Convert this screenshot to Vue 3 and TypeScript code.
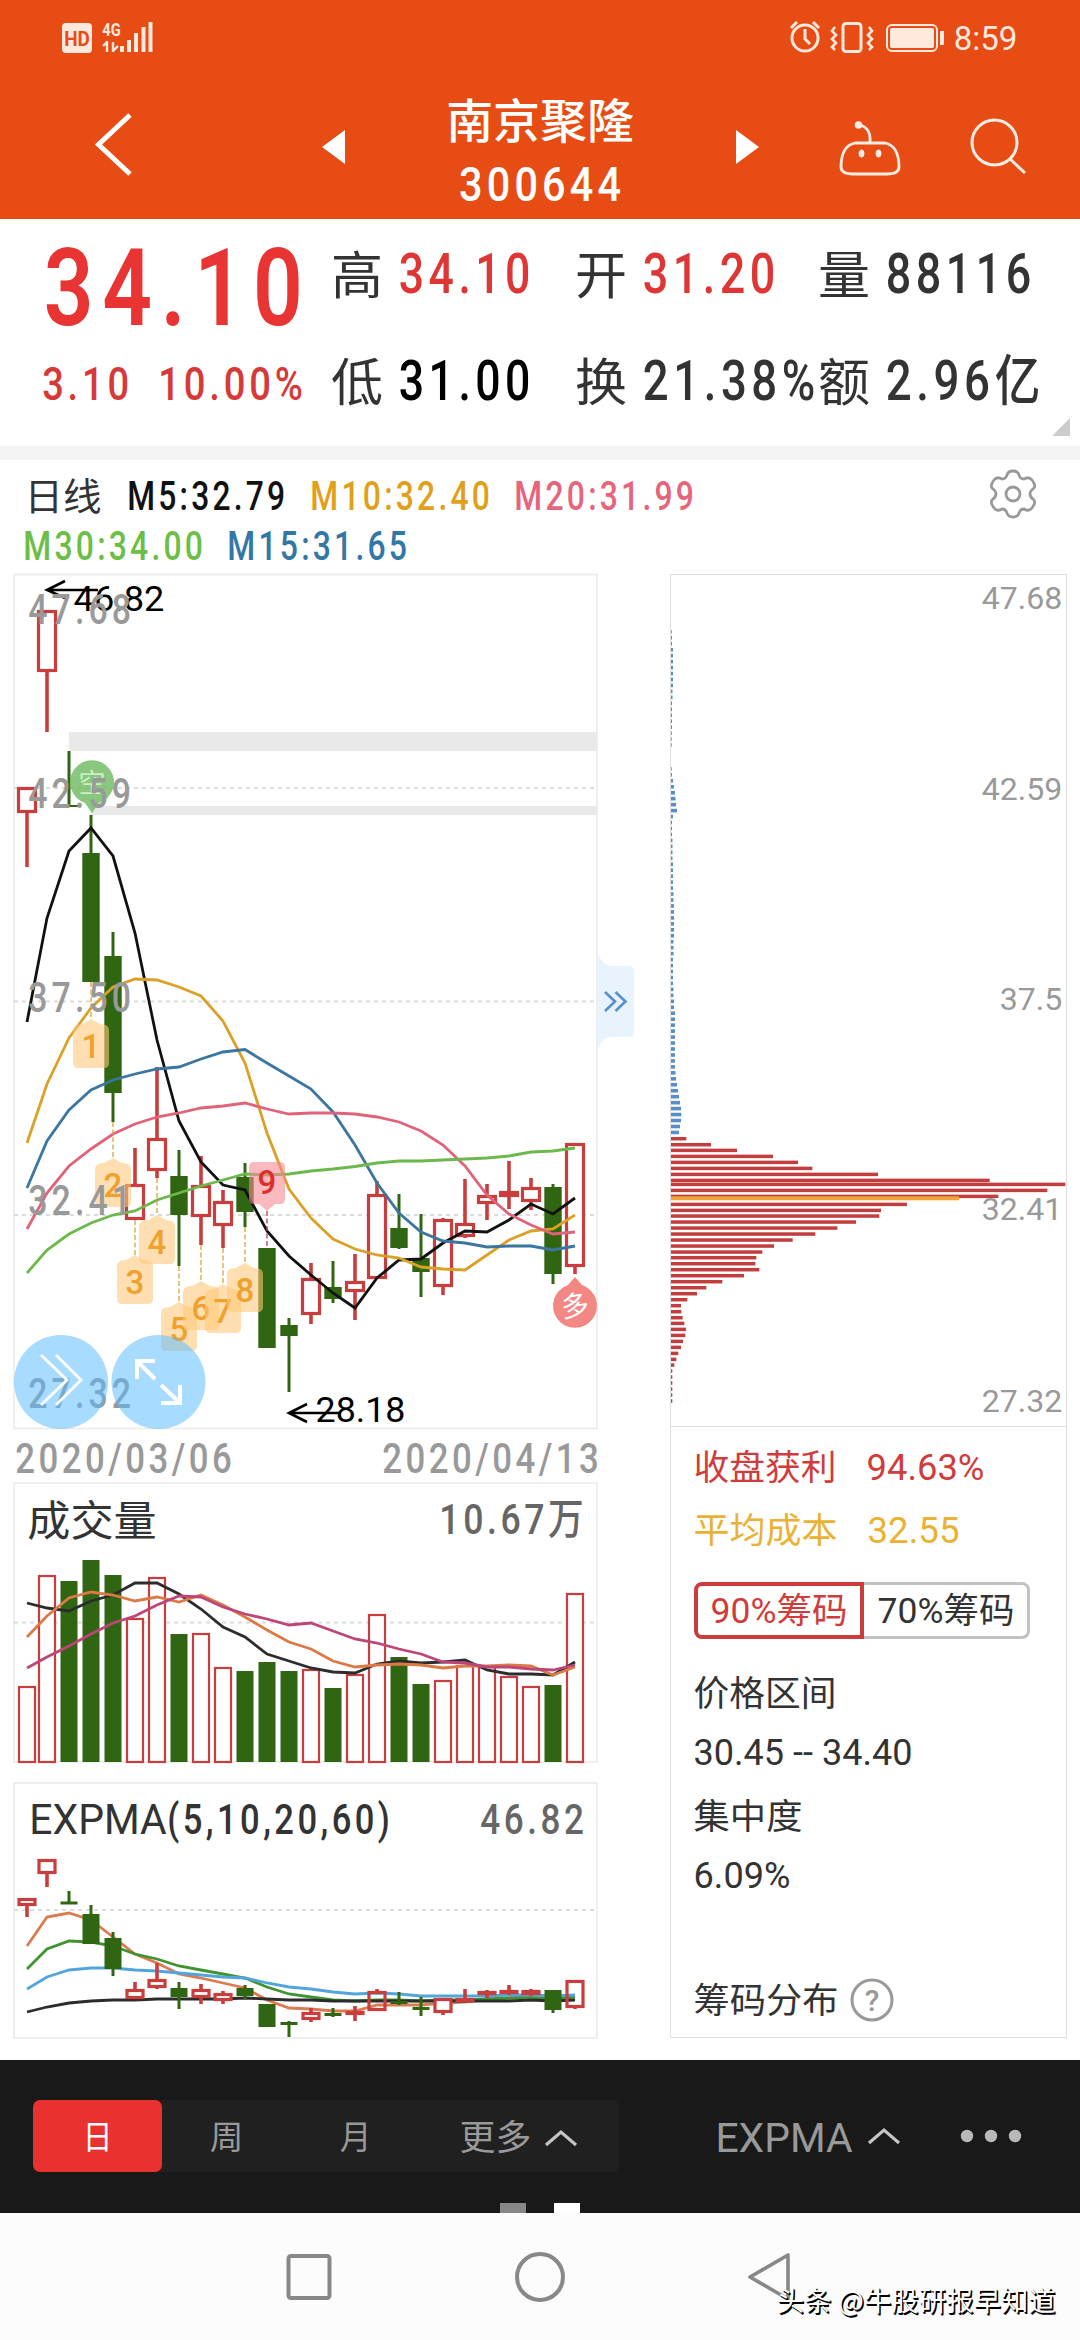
<script setup lang="ts">
import { h, type FunctionalComponent } from 'vue'

/* Text fitted to an exact width; the box is exactly one cap-height tall. */
interface FitProps { t: string; s: number; w: number; c?: string; b?: number; ls?: number }
const Fit: FunctionalComponent<FitProps> = (p) => {
  const cap = Math.round(p.s * 0.711)
  const ls = p.ls ?? 0.1
  return h('svg', { width: p.w, height: cap, style: 'overflow:visible;display:block;flex:none' }, [
    h('text', {
      x: -0.04 * p.s,
      y: cap,
      fill: p.c ?? '#333',
      stroke: 'none',
      'font-size': p.s,
      'font-weight': p.b ?? 500,
      'font-family': 'Roboto, "Noto Sans CJK SC", sans-serif',
      'letter-spacing': ls * p.s,
      textLength: p.w + (0.08 + ls * 0.85) * p.s,
      lengthAdjust: 'spacingAndGlyphs',
    }, p.t),
  ])
}
Fit.props = ['t', 's', 'w', 'c', 'b', 'ls']

const RED = '#c93e3c'
const GREEN = '#306612'
const xs = Array.from({ length: 26 }, (_, i) => (i === 0 ? 27 : i === 1 ? 47 : 69 + 22 * (i - 2)))
const line = (ys: number[]) => ys.map((y, i) => `${xs[i]},${y}`).join(' ')

type Candle = [string, number, number, number, number]
const candles: Candle[] = [
  ['r', 787, 787, 813, 867], ['r', 610, 610, 672, 732], ['t', 751, 805, 807, 807], ['g', 815, 853, 982, 982],
  ['g', 932, 956, 1093, 1122], ['r', 1148, 1184, 1220, 1220], ['r', 1067, 1138, 1171, 1178], ['g', 1150, 1176, 1215, 1266],
  ['r', 1156, 1185, 1217, 1245], ['r', 1190, 1201, 1226, 1248], ['g', 1163, 1177, 1212, 1227], ['g', 1248, 1248, 1348, 1348],
  ['g', 1318, 1325, 1336, 1392], ['r', 1263, 1278, 1315, 1324], ['g', 1261, 1287, 1299, 1303], ['r', 1254, 1281, 1292, 1320],
  ['r', 1181, 1194, 1279, 1279], ['g', 1194, 1228, 1248, 1249], ['g', 1214, 1258, 1272, 1297], ['r', 1218, 1219, 1287, 1295],
  ['r', 1179, 1223, 1237, 1238], ['r', 1184, 1195, 1204, 1220], ['r', 1161, 1191, 1197, 1209], ['r', 1178, 1187, 1202, 1210],
  ['g', 1184, 1187, 1274, 1284], ['r', 1143, 1143, 1267, 1274],
]
const maLines = [
  { c: '#111', y: [1022, 918, 851, 828, 856, 933, 1040, 1121, 1162, 1185, 1190, 1231, 1256, 1275, 1293, 1308, 1278, 1260, 1259, 1243, 1231, 1232, 1220, 1204, 1214, 1198] },
  { c: '#dba126', y: [1143, 1084, 1038, 1008, 987, 979, 980, 987, 996, 1021, 1063, 1133, 1189, 1218, 1239, 1249, 1255, 1258, 1267, 1269, 1270, 1255, 1240, 1231, 1229, 1215] },
  { c: '#3a76a0', y: [1188, 1141, 1110, 1090, 1080, 1074, 1069, 1067, 1059, 1052, 1049.5, 1063, 1076, 1089, 1112, 1145, 1183, 1213, 1232, 1241, 1243, 1247, 1246, 1246, 1250, 1246] },
  { c: '#e0637a', y: [1229, 1193, 1166, 1149, 1134, 1124, 1117, 1113, 1108, 1106, 1103, 1109, 1114, 1113, 1113, 1114, 1117, 1122, 1131, 1145, 1166, 1195, 1214, 1225, 1234, 1232] },
  { c: '#6cb84c', y: [1273, 1250, 1234, 1223, 1215, 1211, 1200, 1193, 1186, 1180, 1174, 1175, 1174, 1171, 1169, 1166.5, 1163, 1161, 1161, 1160, 1159, 1158, 1156, 1152, 1151, 1148] },
]
const axis = [{ t: '47.68', y: 594 }, { t: '42.59', y: 778 }, { t: '37.50', y: 982 }, { t: '32.41', y: 1185 }, { t: '27.32', y: 1378 }]
const badges = [
  { n: 1, x: 91, y: 1019, from: 982 }, { n: 2, x: 113, y: 1158, from: 1122 }, { n: 3, x: 135, y: 1255, from: 1220 },
  { n: 4, x: 157, y: 1215, from: 1178 }, { n: 5, x: 179, y: 1302, from: 1266 }, { n: 6, x: 201, y: 1281, from: 1245 },
  { n: 7, x: 223, y: 1284, from: 1248 }, { n: 8, x: 245, y: 1263, from: 1227 },
]

const volumes: [string, number][] = [
  ['r', 1687], ['r', 1576], ['g', 1581], ['g', 1560], ['g', 1575], ['r', 1619], ['r', 1578], ['g', 1634], ['r', 1634],
  ['r', 1668], ['g', 1671], ['g', 1662], ['g', 1671], ['r', 1670], ['g', 1688], ['r', 1675], ['r', 1615], ['g', 1657],
  ['g', 1684], ['r', 1681], ['r', 1666], ['r', 1667], ['r', 1677], ['r', 1687], ['g', 1685], ['r', 1594],
]
const volLines = [
  { c: '#2c2c2c', y: [1603, 1608, 1611, 1601, 1595, 1583, 1583, 1594, 1609, 1627, 1637, 1654, 1661, 1668, 1672, 1673, 1664, 1661, 1663, 1662, 1660, 1670, 1674, 1674, 1675, 1662] },
  { c: '#dc7a45', y: [1637, 1616, 1598, 1592, 1595, 1601, 1597, 1602, 1595, 1605, 1617, 1630, 1642, 1649, 1661, 1667, 1665, 1664, 1665, 1668, 1666, 1666, 1665, 1666, 1675, 1667] },
  { c: '#bd4579', y: [1668, 1657, 1646, 1634, 1623, 1616, 1605, 1596, 1597, 1607, 1614, 1619, 1625, 1623, 1631, 1639, 1643, 1649, 1654, 1662, 1663, 1667, 1667, 1669, 1670, 1665] },
]

const expCandles: Candle[] = [
  ['r', 1898, 1898, 1906, 1917], ['r', 1859, 1859, 1874, 1887], ['g', 1891, 1901.5, 1904.5, 1904], ['g', 1905, 1914, 1944, 1944],
  ['g', 1932, 1938, 1969, 1976], ['r', 1982, 1989, 1999, 1999], ['r', 1963, 1979, 1988, 1989], ['g', 1982, 1988, 1997, 2009],
  ['r', 1984, 1989, 1998, 2004], ['r', 1991, 1993, 2001, 2004], ['g', 1985, 1988, 1996, 1999], ['g', 2004, 2004, 2027, 2027],
  ['g', 2021, 2022, 2025, 2037], ['r', 2008, 2012, 2020, 2022], ['g', 2008, 2013, 2016, 2017], ['r', 2006, 2011, 2015, 2021],
  ['r', 1989, 1991, 2011, 2011], ['g', 1992, 2001, 2004, 2005], ['g', 1997, 2007, 2010, 2016], ['r', 1998, 1998, 2013, 2015],
  ['r', 1989, 1998, 2002, 2002], ['r', 1990, 1991, 1994, 1998], ['r', 1985, 1990, 1994, 1995], ['r', 1989, 1990, 1995, 1996],
  ['g', 1990, 1990, 2010, 2013], ['r', 1980, 1980, 2008, 2009],
]
const expLines = [
  { c: '#dc7a50', y: [1946, 1917, 1913, 1920, 1937, 1954, 1963, 1974, 1978, 1983, 1988, 2000, 2008, 2009, 2011, 2011, 2005, 2005, 2005, 2003, 2002, 1999, 1998, 1997, 2000, 1995] },
  { c: '#3f9430', y: [1969, 1949, 1941, 1942, 1946, 1954, 1959, 1966, 1970, 1974, 1978, 1987, 1994, 1997, 2000, 2001, 2000, 2000, 2001, 2000, 2000, 1999, 1998, 1997, 1999, 1997] },
  { c: '#52a5dc', y: [1989, 1977, 1970, 1968, 1968, 1970, 1971, 1973, 1975, 1977, 1978, 1983, 1987, 1989, 1992, 1994, 1993, 1994, 1996, 1996, 1996, 1996, 1995, 1995, 1996, 1995] },
  { c: '#2c2c2c', y: [2012, 2007, 2003, 2001, 2000, 2000, 1999, 1999, 1999, 1999, 1998, 1999, 2000, 2000, 2001, 2001, 2001, 2001, 2001, 2001, 2001, 2001, 2001, 2000, 2001, 2000] },
]

/* Chip distribution: trapped chips (blue) above the close, profitable chips (red) below. */
const blueW = [
  0.7, 1, 1, 2, 2, 2, 2, 2, 2, 2, 1.5, 1.5, 1, 1, 1, 1, 1, 0.8, 0.7, 0.7, 0, 0, 0, 0.7, 1, 2, 3, 4, 4.5, 5, 6, 2, 1, 1, 1, 1.5,
  1.5, 1.5, 1.5, 2, 2, 2, 2, 2, 2.5, 2.5, 3, 3, 3, 3, 3, 3, 2.5, 2.5, 2.5, 2, 2, 2, 2, 2, 2.5, 2.5, 3, 3, 4, 4, 4, 4, 4, 4, 4,
  4, 4, 4, 4.5, 5, 6, 7, 8, 9, 10, 10.3, 10, 9, 8,
]
const redBars = [
  [113, 138], [131, 212], [148, 290], [166, 398], [184, 473], [202, 516], [220, 713], [238, 1048], [250, 1275], [268, 1221],
  [286, 1074], [310, 800], [328, 722], [345, 717], [363, 647], [381, 591], [399, 525], [417, 457], [435, 401], [453, 366],
  [470, 348], [488, 345], [506, 357], [524, 311], [542, 246], [560, 198], [578, 170], [596, 141], [614, 122], [632, 123],
  [650, 127], [667, 132], [685, 137], [703, 135], [721, 128], [739, 122], [757, 114], [775, 108], [792, 102], [810, 96],
  [828, 96], [846, 96], [864, 96], [882, 96], [900, 96],
].map(([y, x]) => ({ y: 1100 + y / 3 - 1.7, w: (x - 92) / 3 }))
const chipAxis = [
  { t: '47.68', b: 608, w: 78 }, { t: '42.59', b: 799, w: 78 }, { t: '37.5', b: 1009, w: 60 },
  { t: '32.41', b: 1219, w: 78 }, { t: '27.32', b: 1411, w: 78 },
]

const stats = [
  { l: '高', v: '34.10', w: 127, c: '#dd3635' }, { l: '开', v: '31.20', w: 128, c: '#dd3635' }, { l: '量', v: '88116', w: 141, c: '#333' },
  { l: '低', v: '31.00', w: 127, c: '#000' }, { l: '换', v: '21.38%', w: 168, c: '#333' }, { l: '额', v: '2.96亿', w: 150, c: '#333' },
]
</script>

<template>
  <div class="page">
    <header class="top">
      <div class="status">
        <div class="hd"><Fit t="HD" :s="21" :w="24" c="#e64c14" :b="700" :ls="0" /></div>
        <svg class="signal" width="54" height="34" viewBox="100 20 54 34" fill="#ffe8dc">
          <Fit x="103" y="23" t="4G" :s="18" :w="17" c="#ffe8dc" :b="700" :ls="0" />
          <path d="M107 41v11M107 42l-4 4M113 42v10M113 51l5-5" stroke="#ffe8dc" stroke-width="2.4" fill="none" />
          <path d="M120 46h4v6h-4zM127 40h4v12h-4zM134 33h4v19h-4zM141.500 27h4v25h-4zM148.500 22h4v30h-4z" />
        </svg>
        <svg class="sys" width="232" height="34" viewBox="788 20 232 34" fill="none" stroke="#ffe8dc" stroke-width="3">
          <circle cx="805" cy="38" r="13" />
          <path d="M805 29v10l5 5M791 28l6-6M819 28l-6-6" />
          <rect x="843" y="23.500" width="18" height="28" rx="3" />
          <path d="M835 27l-3 4 4 4-4 4 4 4-4 4 3 3M869 27l3 4-4 4 4 4-4 4 4 4-3 3" stroke-width="2.600" />
          <rect x="887" y="25" width="50" height="26" rx="5" stroke-width="2" />
          <rect x="890" y="28" width="44" height="20" rx="2" fill="#ffe8dc" stroke="none" />
          <path d="M942 31v14" stroke-width="4" />
          <Fit x="955" y="26" t="8:59" :s="34" :w="61" c="#ffe8dc" :b="400" :ls="0" />
        </svg>
      </div>
      <div class="nav">
        <svg class="back" width="40" height="66" viewBox="95 111 40 66"><path d="M130 115L98.500 144.500 130 174" fill="none" stroke="#fff" stroke-width="5" /></svg>
        <svg class="prev" width="24" height="36" viewBox="322 129 24 36"><path d="M322 147l23-17v34z" fill="#fff" /></svg>
        <div class="title">
          <Fit t="南京聚隆" :s="46.500" :w="184" c="#fff" :b="500" :ls="0" />
          <Fit t="300644" :s="49" :w="158" c="#fff" :b="500" />
        </div>
        <svg class="next" width="24" height="36" viewBox="735 129 24 36"><path d="M759 147l-23-17v34z" fill="#fff" /></svg>
        <svg class="robot" width="64" height="60" viewBox="838 118 64 60" fill="none" stroke="#ffede4" stroke-width="2.800">
          <path d="M855 143h30q14 3 14 24 0 7-12 7h-34q-12 0-12-7 0-21 14-24zM870 142q1-14-10-17" />
          <circle cx="858.500" cy="125" r="3" fill="#ffede4" stroke-width="1.500" />
          <ellipse cx="861.500" cy="153.500" rx="2.500" ry="3.600" fill="#ffede4" stroke-width="1" />
          <ellipse cx="878.500" cy="153.500" rx="2.500" ry="3.600" fill="#ffede4" stroke-width="1" />
        </svg>
        <svg class="search" width="60" height="60" viewBox="968 116 60 60" fill="none" stroke="#ffede4" stroke-width="3">
          <circle cx="994.500" cy="142.500" r="22.500" /><path d="M1010 159l15 14" />
        </svg>
      </div>
    </header>

    <section class="quote">
      <div class="price">
        <Fit class="big" t="34.10" :s="108" :w="250" c="#e83432" :b="600" />
        <div class="change">
          <Fit t="3.10" :s="46.500" :w="83" c="#d63a38" />
          <Fit t="10.00%" :s="46.500" :w="141" c="#d63a38" />
        </div>
      </div>
      <div class="stats">
        <div v-for="s in stats" :key="s.l" class="stat">
          <Fit class="stat-label" :t="s.l" :s="51" :w="48" :b="400" :ls="0" />
          <Fit :t="s.v" :s="55" :w="s.w" :c="s.c" />
        </div>
      </div>
      <svg class="corner" width="18" height="18"><path d="M18 0v18H0z" fill="#ccc" /></svg>
    </section>
    <div class="band"></div>

    <section class="averages">
      <div class="avg-lines">
        <div class="avg-row">
          <Fit t="日线" :s="38" :w="74" :b="400" :ls="0" />
          <Fit class="m5" t="M5:32.79" :s="41" :w="154" c="#111" />
          <Fit class="m10" t="M10:32.40" :s="41" :w="176" c="#dfa11a" />
          <Fit class="m20" t="M20:31.99" :s="41" :w="176" c="#e6647c" />
        </div>
        <div class="avg-row second">
          <Fit t="M30:34.00" :s="41" :w="176" c="#6cbe46" />
          <Fit class="m15" t="M15:31.65" :s="41" :w="176" c="#3377a6" />
        </div>
      </div>
      <svg class="gear" width="50" height="50" viewBox="-25 -25 50 50" fill="none" stroke="#999" stroke-width="2.800">
        <path d="M-6-19Q-5-23 0-23T6-19Q7-15 11-15 16-18 19-14 23-9 21-6 17-3 17 0T21 6Q23 9 19 14 16 18 11 15 7 15 6 19 5 23 0 23T-6 19Q-7 15-11 15-16 18-19 14-23 9-21 6-17 3-17 0T-21-6Q-23-9-19-14-16-18-11-15-7-15-6-19Z" />
        <circle r="7" />
      </svg>
    </section>

    <main class="charts">
      <div class="left">
        <svg class="kline" width="584" height="856" viewBox="14 574 584 856">
          <rect x="14" y="574.500" width="583" height="854" fill="none" stroke="#ebebeb" stroke-width="1.600" />
          <path d="M14 788h583M14 1001.500h583M14 1215h583" stroke="#dcdcdc" stroke-width="2" stroke-dasharray="4 4" />
          <path d="M69 732h528v19H69zM91 806h506v9H91z" fill="#e9e9e9" />
          <g v-for="(k, i) in candles" :key="i">
            <template v-if="k[0] === 'r'">
              <path :d="`M${xs[i]} ${k[1]}V${k[2]}M${xs[i]} ${k[3]}V${k[4]}`" :stroke="RED" stroke-width="3.600" />
              <rect :x="xs[i] - 8.500" :y="k[2] + 1.500" width="17" :height="Math.max(k[3] - k[2] - 3, 2)" fill="#fff" :stroke="RED" stroke-width="3.200" />
            </template>
            <template v-else>
              <path :d="`M${xs[i]} ${k[1]}V${k[4]}`" :stroke="GREEN" stroke-width="3" />
              <rect :x="k[0] === 't' ? xs[i] : xs[i] - 8.700" :y="k[2]" :width="k[0] === 't' ? 9 : 17.400" :height="k[3] - k[2]" :fill="GREEN" />
            </template>
          </g>
          <polyline v-for="l in maLines" :key="l.c" :points="line(l.y)" fill="none" :stroke="l.c" stroke-width="2.800" />
          <g class="pin" transform="translate(92 783)">
            <path d="M0 30L-7 20A22 22 0 1 1 7 20Z" fill="#6fbb63" fill-opacity=".82" />
            <text x="0" y="10" text-anchor="middle" font-size="27" fill="#c9efc2">空</text>
          </g>
          <g v-for="b in badges" :key="b.n">
            <path :d="`M${b.x} ${b.from}V${b.y}`" stroke="#d6a53c" stroke-width="1.300" stroke-dasharray="5 2.500" />
            <path :d="`M${b.x} ${b.y}l9 5q9 0 9 6v33q0 5-5 5h-26q-5 0-5-5v-33q0-6 9-6z`" fill="#ffc878" fill-opacity=".58" />
            <text class="num" :x="b.x" :y="b.y + 39" fill="#f0a12d">{{ b.n }}</text>
          </g>
          <path d="M267 1211v37" stroke="#b54050" stroke-width="1.300" stroke-dasharray="5 2.500" />
          <path d="M267 1211l-8-7h-5q-5 0-5-5v-32q0-5 5-5h26q5 0 5 5v32q0 5-5 5h-5z" fill="#f58a92" fill-opacity=".6" />
          <text class="num" x="267" y="1194" fill="#e02b2b">9</text>
          <g class="pin" transform="translate(575 1306)">
            <path d="M0-29L7-21A22 22 0 1 1-7-21Z" fill="#f38783" />
            <text x="0" y="10" text-anchor="middle" font-size="28" fill="#fff" transform="rotate(-8)">多</text>
          </g>
          <g fill="none" stroke="#000" stroke-width="2.600">
            <path d="M98 590H47M65 581l-18 9 18 8M339 1413H289M307 1404l-18 9 18 9" />
          </g>
          <Fit x="75" y="586" t="46.82" :s="35.500" :w="88" c="#000" :b="400" :ls="0" />
          <Fit x="317" y="1397" t="28.18" :s="35.500" :w="87" c="#000" :b="400" :ls="0" />
          <Fit v-for="a in axis" :key="a.t" x="30" :y="a.y" :t="a.t" :s="42" :w="99" c="#999" :ls=".12" />
          <g fill="#57baff" fill-opacity=".52"><circle cx="61" cy="1382" r="47" /><circle cx="158.500" cy="1382" r="47" /></g>
          <g fill="none" stroke="#fff" stroke-width="2.800">
            <path d="M41 1355l26 25-26 25M56 1355l25 25-25 25" />
            <path d="M137 1379v-18h18M137 1361l18 18M180 1385v18h-19M161 1385l19 18" stroke-width="4" />
          </g>
          <path d="M598 953q4 13 14 13h17q5 0 5 5v61q0 5-5 5h-17q-10 0-14 11z" fill="#e8f3fd" />
          <path d="M605 992l10 9.500-10 9.500M615.500 992l10 9.500-10 9.500" fill="none" stroke="#5590cf" stroke-width="2.600" />
        </svg>
        <div class="dates">
          <Fit t="2020/03/06" :s="42.500" :w="213" c="#999" :b="500" />
          <Fit t="2020/04/13" :s="42.500" :w="213" c="#999" :b="500" />
        </div>
        <svg class="volume" width="584" height="282" viewBox="14 1482 584 282">
          <rect x="14" y="1483" width="583" height="279" fill="none" stroke="#ebebeb" stroke-width="1.600" />
          <path d="M14 1622.500h583" stroke="#dcdcdc" stroke-width="2" stroke-dasharray="4 4" />
          <Fit x="29" y="1505.500" t="成交量" :s="42.500" :w="126" :b="400" :ls="0" />
          <Fit x="441" y="1504" t="10.67万" :s="42.500" :w="141" c="#666" />
          <g v-for="(v, i) in volumes" :key="i">
            <rect v-if="v[0] === 'r'" :x="xs[i] - 8" :y="v[1]" width="16" :height="1762 - v[1]" fill="#fff" :stroke="RED" stroke-width="2.200" />
            <rect v-else :x="xs[i] - 8.500" :y="v[1]" width="17" :height="1762 - v[1]" :fill="GREEN" />
          </g>
          <polyline v-for="l in volLines" :key="l.c" :points="line(l.y)" fill="none" :stroke="l.c" stroke-width="2.800" />
        </svg>
        <svg class="expma" width="584" height="258" viewBox="14 1782 584 258">
          <rect x="14" y="1783" width="583" height="255" fill="none" stroke="#ebebeb" stroke-width="1.600" />
          <path d="M14 1910h583" stroke="#dcdcdc" stroke-width="2" stroke-dasharray="4 4" />
          <Fit x="31" y="1803" t="EXPMA" :s="43" :w="134" :b="400" :ls="0" />
          <Fit x="169" y="1803" t="(5,10,20,60)" :s="43" :w="219" />
          <Fit x="482" y="1803" t="46.82" :s="43" :w="100" c="#666" />
          <polyline v-for="l in expLines" :key="l.c" :points="line(l.y)" fill="none" :stroke="l.c" stroke-width="2.800" />
          <g v-for="(k, i) in expCandles" :key="i">
            <template v-if="k[0] === 'r'">
              <path :d="`M${xs[i]} ${k[1]}V${k[2]}M${xs[i]} ${k[3]}V${k[4]}`" :stroke="RED" stroke-width="3.600" />
              <rect :x="xs[i] - 8" :y="k[2] + 1.500" width="16" :height="Math.max(k[3] - k[2] - 3, 1)" fill="#fff" :fill-opacity="i === 16 || i === 25 ? 0 : 1" :stroke="RED" stroke-width="3.200" />
            </template>
            <template v-else>
              <path :d="`M${xs[i]} ${k[1]}V${k[4]}`" :stroke="GREEN" stroke-width="3" />
              <rect :x="xs[i] - 8.500" :y="k[2]" width="17" :height="k[3] - k[2]" :fill="GREEN" />
            </template>
          </g>
        </svg>
      </div>

      <aside class="chips">
        <svg class="chip-chart" width="395" height="851" viewBox="671 574 395 851">
          <template v-for="(w, i) in blueW" :key="i">
            <rect v-if="w" x="671" :y="629 + 5.960 * i" :width="w" height="3.600" fill="#5a8ec9" />
          </template>
          <rect v-for="(r, i) in redBars" :key="'r' + i" x="671" :y="r.y" :width="r.w" height="3.500" fill="#c23e3e" />
          <rect x="671" y="1195.300" width="288" height="4" fill="#eea43a" />
          <Fit v-for="a in chipAxis" :key="a.t" :x="1061 - a.w" :y="a.b - 23" :t="a.t" :s="32" :w="a.w" c="#999" :b="400" :ls="0" />
        </svg>
        <div class="info">
          <div class="pair"><Fit t="收盘获利" :s="35.500" :w="140" c="#cf3c3b" :b="400" :ls="0" /><Fit t="94.63%" :s="36" :w="115" c="#cf3c3b" :b="400" :ls="0" /></div>
          <div class="pair avg"><Fit t="平均成本" :s="35.500" :w="141" c="#e9b233" :b="400" :ls="0" /><Fit t="32.55" :s="36" :w="89" c="#e9b233" :b="400" :ls="0" /></div>
          <div class="switch">
            <div class="seg on"><Fit t="90%筹码" :s="35.500" :w="134" c="#cf3c3b" :b="400" :ls="0" /></div>
            <div class="seg"><Fit t="70%筹码" :s="35.500" :w="134" :b="400" :ls="0" /></div>
          </div>
          <Fit class="r1" t="价格区间" :s="35.500" :w="140" :b="400" :ls="0" />
          <Fit class="r2" t="30.45 -- 34.40" :s="36" :w="216" :b="400" :ls="0" />
          <Fit class="r3" t="集中度" :s="35.500" :w="106" :b="400" :ls="0" />
          <Fit class="r4" t="6.09%" :s="36" :w="94" :b="400" :ls="0" />
          <div class="legend">
            <Fit t="筹码分布" :s="35.500" :w="142" :b="400" :ls="0" />
            <svg width="44" height="44" viewBox="-22 -22 44 44"><circle r="20" fill="none" stroke="#999" stroke-width="3" /><text x="0" y="11" text-anchor="middle" font-size="30" font-weight="500" fill="#999" class="q">?</text></svg>
          </div>
        </div>
      </aside>
    </main>

    <footer class="tools">
      <div class="tool-row">
        <div class="periods">
          <div class="period active"><Fit t="日" :s="33" :w="27" c="#fff" :b="400" :ls="0" /></div>
          <div class="period"><Fit t="周" :s="33" :w="31" c="#999" :b="400" :ls="0" /></div>
          <div class="period"><Fit t="月" :s="33" :w="29" c="#999" :b="400" :ls="0" /></div>
          <div class="period more">
            <Fit t="更多" :s="35" :w="69" c="#999" :b="400" :ls="0" />
            <svg width="34" height="18"><path d="M2 16L17 3l15 13" fill="none" stroke="#c4c4c4" stroke-width="3.200" /></svg>
          </div>
        </div>
        <div class="indicator">
          <Fit class="ind-name" t="EXPMA" :s="40" :w="134" c="#999" :b="400" :ls="0" />
          <svg width="34" height="18"><path d="M2 16L17 3l15 13" fill="none" stroke="#c4c4c4" stroke-width="3.200" /></svg>
        </div>
        <svg class="dots" width="62" height="14" fill="#b8b8b8"><circle cx="7" cy="7" r="6.200" /><circle cx="31" cy="7" r="6.200" /><circle cx="55" cy="7" r="6.200" /></svg>
      </div>
      <div class="pages"><i></i><i class="cur"></i></div>
    </footer>

    <div class="sysnav">
      <svg width="506" height="52" viewBox="285 2251 506 52" fill="none" stroke="#888" stroke-width="4" stroke-linejoin="round">
        <rect x="288.500" y="2256" width="41" height="42" rx="2.500" />
        <circle cx="540" cy="2277" r="23" />
        <path d="M788 2255v44l-38-22z" stroke-width="3.600" />
      </svg>
      <div class="mark">头条 @牛股研报早知道</div>
    </div>
  </div>
</template>

<style>
body { background: #fff; }
</style>

<style scoped>
.page { width: 1080px; height: 2340px; overflow: hidden; background: #fff; font-family: Roboto, "Noto Sans CJK SC", sans-serif; display: flex; flex-direction: column; box-sizing: border-box; }
.page svg { display: block; flex: none; overflow: visible; }
.top { height: 219px; background: #e64c14; flex: none; }
.status { height: 74px; padding: 20px 60px 0 62px; display: flex; box-sizing: border-box; }
.hd { width: 30px; height: 30px; margin: 3px 8px 0 0; border-radius: 4px; background: #ffe8dc; display: flex; align-items: center; justify-content: center; }
.sys { margin-left: auto; }
.nav { display: flex; align-items: flex-start; padding-left: 95px; }
.back { margin-top: 37px; }
.prev { margin: 55px 0 0 187px; }
.title { width: 186px; margin: 31px 0 0 101px; display: flex; flex-direction: column; align-items: center; gap: 28px; }
.next { margin: 55px 0 0 102px; }
.robot { margin: 44px 0 0 79px; }
.search { margin: 42px 0 0 66px; }

.quote { position: relative; height: 227px; flex: none; display: flex; }
.price { width: 333px; padding: 29px 0 0 44px; box-sizing: border-box; flex: none; }
.big { margin-left: 4px; }
.change { display: flex; gap: 33px; margin-top: 42px; }
.stats { display: grid; grid-template-columns: 244px 243px 260px; row-gap: 68px; align-content: start; padding-top: 35px; }
.stat { display: flex; align-items: flex-end; gap: 20px; height: 39px; }
.stat-label { margin-bottom: -1px; }
.corner { position: absolute; right: 10px; bottom: 10px; }
.band { height: 14px; background: #f4f4f4; flex: none; }

.averages { height: 114px; flex: none; display: flex; justify-content: space-between; padding: 0 42px 0 26px; }
.avg-lines { padding-top: 21px; }
.avg-row { display: flex; align-items: flex-end; height: 29px; margin-bottom: 21px; }
.avg-row.second { margin-left: -1px; }
.m5 { margin-left: 29px; }
.m10 { margin-left: 29px; }
.m20 { margin-left: 28px; }
.m15 { margin-left: 28px; }
.gear { margin-top: 9px; }

.charts { height: 1486px; flex: none; display: flex; padding-left: 14px; }
.left { width: 584px; }
.kline { position: relative; }
.pin text { font-family: "Noto Sans CJK SC", sans-serif; }
.num { font-size: 33px; font-weight: 500; text-anchor: middle; }
.dates { display: flex; justify-content: space-between; padding: 13px 1px 0 3px; height: 39px; }
.expma { margin-top: 18px; }
.chips { margin-left: 72px; width: 395px; height: 1462px; border: 1px solid #dedede; box-sizing: content-box; }
.info { border-top: 1px solid #dedede; padding: 27px 0 0 24px; }
.pair { display: flex; align-items: flex-end; gap: 33px; }
.pair.avg { margin-top: 37px; }
.switch { display: flex; margin: 39px 0 0 -1px; width: 336px; height: 57px; }
.seg { box-sizing: border-box; width: 166px; border: 3px solid #c2c2c2; border-left: 0; border-radius: 0 8px 8px 0; display: flex; align-items: center; justify-content: center; }
.seg.on { width: 170px; border: 4px solid #cb3d3c; border-radius: 8px 0 0 8px; }
.r1 { margin-top: 42px; }
.r2 { margin-top: 33px; }
.r3 { margin-top: 39px; }
.r4 { margin-top: 33px; }
.legend { display: flex; align-items: center; gap: 13px; margin-top: 90px; }
.q { font-family: Roboto, sans-serif; }

.tools { height: 153px; background: #191919; flex: none; display: flex; flex-direction: column; justify-content: space-between; }
.tool-row { display: flex; align-items: center; padding: 40px 0 0 33px; }
.periods { width: 586px; height: 72px; background: #202020; border-radius: 7px; display: flex; }
.period { width: 129px; padding-top: 3px; box-sizing: border-box; display: flex; align-items: center; justify-content: center; }
.period.active { background: #e93130; border-radius: 7px; }
.more { width: 199px; gap: 14px; }
.indicator { display: flex; align-items: center; gap: 16px; margin-left: 98px; }
.ind-name { margin-top: 3px; }
.dots { margin-left: 59px; }
.pages { display: flex; gap: 28px; justify-content: center; }
.pages i { width: 26px; height: 10px; background: #888; }
.pages i.cur { background: #fff; }

.sysnav { position: relative; flex: 1; background: #fcfcfc; padding: 38px 0 0 285px; }
.mark { position: absolute; right: 24px; bottom: 21px; font: 400 27px/38px "Noto Sans CJK SC", sans-serif; letter-spacing: .4px; color: #fff; text-shadow: 1.500px 1.500px 0 #000, 1px 1px 1px #000; white-space: nowrap; }
</style>
